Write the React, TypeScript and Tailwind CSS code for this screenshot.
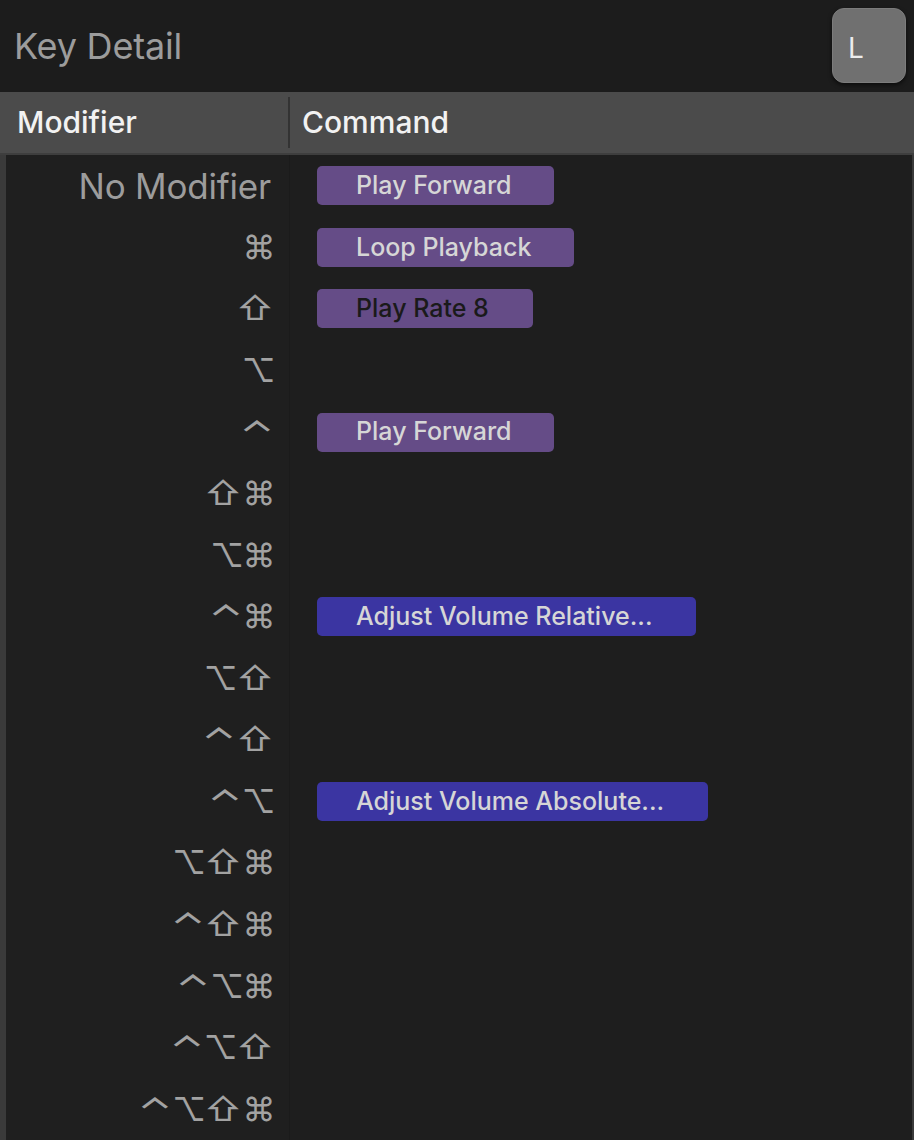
import React from "react";

type Cmd = { label: string; w: string; bg: string; text: string };
type Row = { mod: string; cmd?: Cmd };

const purple = "bg-[#654c87]";
const blue = "bg-[#3b35a2]";
const light = "text-[#d6d6d6]";
const dark = "text-[#1a1a1a]";

const rows: Row[] = [
  { mod: "No Modifier", cmd: { label: "Play Forward", w: "w-[237px]", bg: purple, text: light } },
  { mod: "⌘", cmd: { label: "Loop Playback", w: "w-[257px]", bg: purple, text: light } },
  { mod: "⇧", cmd: { label: "Play Rate 8", w: "w-[216px]", bg: purple, text: dark } },
  { mod: "⌥" },
  { mod: "⌃", cmd: { label: "Play Forward", w: "w-[237px]", bg: purple, text: light } },
  { mod: "⇧⌘" },
  { mod: "⌥⌘" },
  { mod: "⌃⌘", cmd: { label: "Adjust Volume Relative...", w: "w-[379px]", bg: blue, text: light } },
  { mod: "⌥⇧" },
  { mod: "⌃⇧" },
  { mod: "⌃⌥", cmd: { label: "Adjust Volume Absolute...", w: "w-[391px]", bg: blue, text: light } },
  { mod: "⌥⇧⌘" },
  { mod: "⌃⇧⌘" },
  { mod: "⌃⌥⌘" },
  { mod: "⌃⌥⇧" },
  { mod: "⌃⌥⇧⌘" },
];

function Mods({ s }: { s: string }) {
  return (
    <span className="text-[33px] text-[#a2a2a2] leading-none whitespace-nowrap tracking-[-1.5px]">
      {Array.from(s).map((c, j) =>
        c === "⌃" ? (
          <span key={j} className="inline-block scale-x-[1.35] mx-[4px] tracking-normal">⌃</span>
        ) : c === "⇧" ? (
          <span key={j} className="inline-block scale-x-[1.12] mx-[2px] tracking-normal">⇧</span>
        ) : (
          <React.Fragment key={j}>{c}</React.Fragment>
        )
      )}
    </span>
  );
}

export default function App() {
  return (
    <div className="w-[914px] h-[1140px] bg-[#1f1f1f] flex flex-col overflow-hidden font-['Inter','Noto_Sans',sans-serif]">
      {/* Title bar */}
      <div className="h-[92px] bg-[#1c1c1c] flex items-center justify-between pl-[14px] pr-[8px] shrink-0">
        <span className="text-[36px] text-[#9c9c9c] tracking-[-0.2px]">Key Detail</span>
        <div className="w-[74px] h-[75px] rounded-[12px] bg-[#707070] border border-[#7c7c7c] shadow-[0_2px_4px_rgba(0,0,0,0.6)] flex items-center pl-[15px] pt-[6px] mb-[2px]">
          <span className="text-[28px] text-[#ececec] leading-none">L</span>
        </div>
      </div>

      {/* Header row */}
      <div className="h-[63px] bg-[#4b4b4b] flex items-stretch shrink-0 border-b-[2px] border-[#3e3e3e]">
        <div className="w-[290px] flex items-center pl-[17px] border-r-[2px] border-[#333333] my-[5px]">
          <span className="text-[30px] font-medium text-[#f2f2f2]">Modifier</span>
        </div>
        <div className="flex-1 flex items-center pl-[12px]">
          <span className="text-[30px] font-medium text-[#f2f2f2]">Command</span>
        </div>
      </div>

      {/* Body */}
      <div className="flex-1 flex flex-col border-l-[6px] border-l-[#3a3a3a] border-r-[2px] border-r-[#3a3a3a]">
        {rows.map((r, i) => (
          <div key={i} className="flex-1 flex items-center">
            <div className="w-[284px] h-full bg-[#1f1f1f] flex items-center justify-end pr-[15px] border-r border-[#1b1b1b]">
              {r.mod === "No Modifier" ? (
                <span className="text-[35px] text-[#9c9c9c] pr-[3px] tracking-[-0.2px]">No Modifier</span>
              ) : (
                <Mods s={r.mod} />
              )}
            </div>
            <div className="flex-1 h-full flex items-center pl-[27px] bg-[#1e1e1e]">
              {r.cmd && (
                <div className={"h-[39px] rounded-[5px] flex items-center pl-[39px] " + r.cmd.w + " " + r.cmd.bg}>
                  <span className={"text-[25px] font-medium whitespace-nowrap " + r.cmd.text}>{r.cmd.label}</span>
                </div>
              )}
            </div>
          </div>
        ))}
      </div>
    </div>
  );
}
